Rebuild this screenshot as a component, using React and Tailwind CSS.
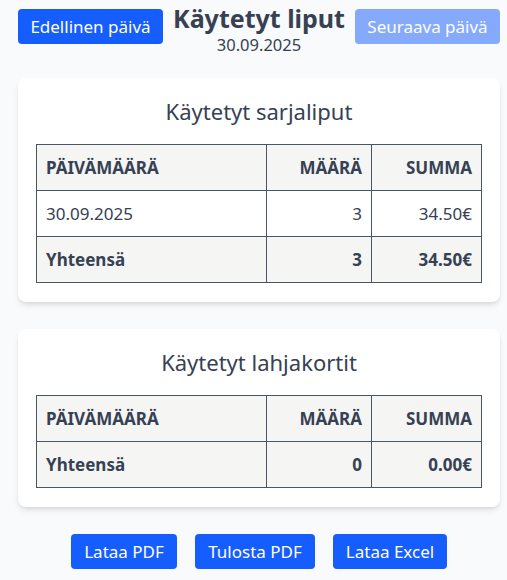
import React from 'react';

const font = { fontFamily: '"Noto Sans", "Open Sans", sans-serif' };

const Table = ({ rows, total }) => (
  <table className="w-full border-collapse border border-gray-600 text-[17px] text-gray-700">
    <thead>
      <tr className="bg-stone-100 h-[46px]">
        <th className="border border-gray-600 px-[9px] text-left font-bold w-[230px]">PÄIVÄMÄÄRÄ</th>
        <th className="border border-gray-600 px-[9px] text-right font-bold">MÄÄRÄ</th>
        <th className="border border-gray-600 px-[9px] text-right font-bold w-[110px]">SUMMA</th>
      </tr>
    </thead>
    <tbody>
      {rows.map((r) => (
        <tr key={r.date} className="bg-white h-[46px]">
          <td className="border border-gray-600 px-[9px]">{r.date}</td>
          <td className="border border-gray-600 px-[9px] text-right">{r.count}</td>
          <td className="border border-gray-600 px-[9px] text-right">{r.sum}</td>
        </tr>
      ))}
      <tr className="bg-stone-100 h-[46px] font-bold">
        <td className="border border-gray-600 px-[9px]">Yhteensä</td>
        <td className="border border-gray-600 px-[9px] text-right">{total.count}</td>
        <td className="border border-gray-600 px-[9px] text-right">{total.sum}</td>
      </tr>
    </tbody>
  </table>
);

const Card = ({ title, children }) => (
  <div className="bg-white rounded-lg shadow-md px-[18px] pt-[18px] pb-[19px]">
    <h2 className="text-center text-[22px] text-gray-700 leading-[30px] mb-[18px]">{title}</h2>
    {children}
  </div>
);

export default function App() {
  return (
    <div className="min-h-screen bg-gray-50 pl-[18px] pr-[7px] pt-[2px]" style={font}>
      <div className="flex items-start justify-between">
        <button className="mt-[7px] h-[35px] w-[145px] rounded bg-blue-600 text-white text-[17px]">Edellinen päivä</button>
        <div className="text-center text-gray-700">
          <h1 className="text-[25px] font-bold leading-[33px]">Käytetyt liput</h1>
          <div className="text-[16.5px] leading-[20px]">30.09.2025</div>
        </div>
        <button className="mt-[7px] h-[35px] w-[145px] rounded bg-blue-600 opacity-50 text-white text-[17px]">Seuraava päivä</button>
      </div>

      <div className="mt-[23px] flex flex-col gap-[27px]">
        <Card title="Käytetyt sarjaliput">
          <Table rows={[{ date: '30.09.2025', count: 3, sum: '34.50€' }]} total={{ count: 3, sum: '34.50€' }} />
        </Card>
        <Card title="Käytetyt lahjakortit">
          <Table rows={[]} total={{ count: 0, sum: '0.00€' }} />
        </Card>
      </div>

      <div className="mt-[27px] flex justify-center gap-[18px]">
        <button className="h-[35px] w-[106px] rounded bg-blue-600 text-white text-[17px]">Lataa PDF</button>
        <button className="h-[35px] w-[120px] rounded bg-blue-600 text-white text-[17px]">Tulosta PDF</button>
        <button className="h-[35px] w-[114px] rounded bg-blue-600 text-white text-[17px]">Lataa Excel</button>
      </div>
    </div>
  );
}
